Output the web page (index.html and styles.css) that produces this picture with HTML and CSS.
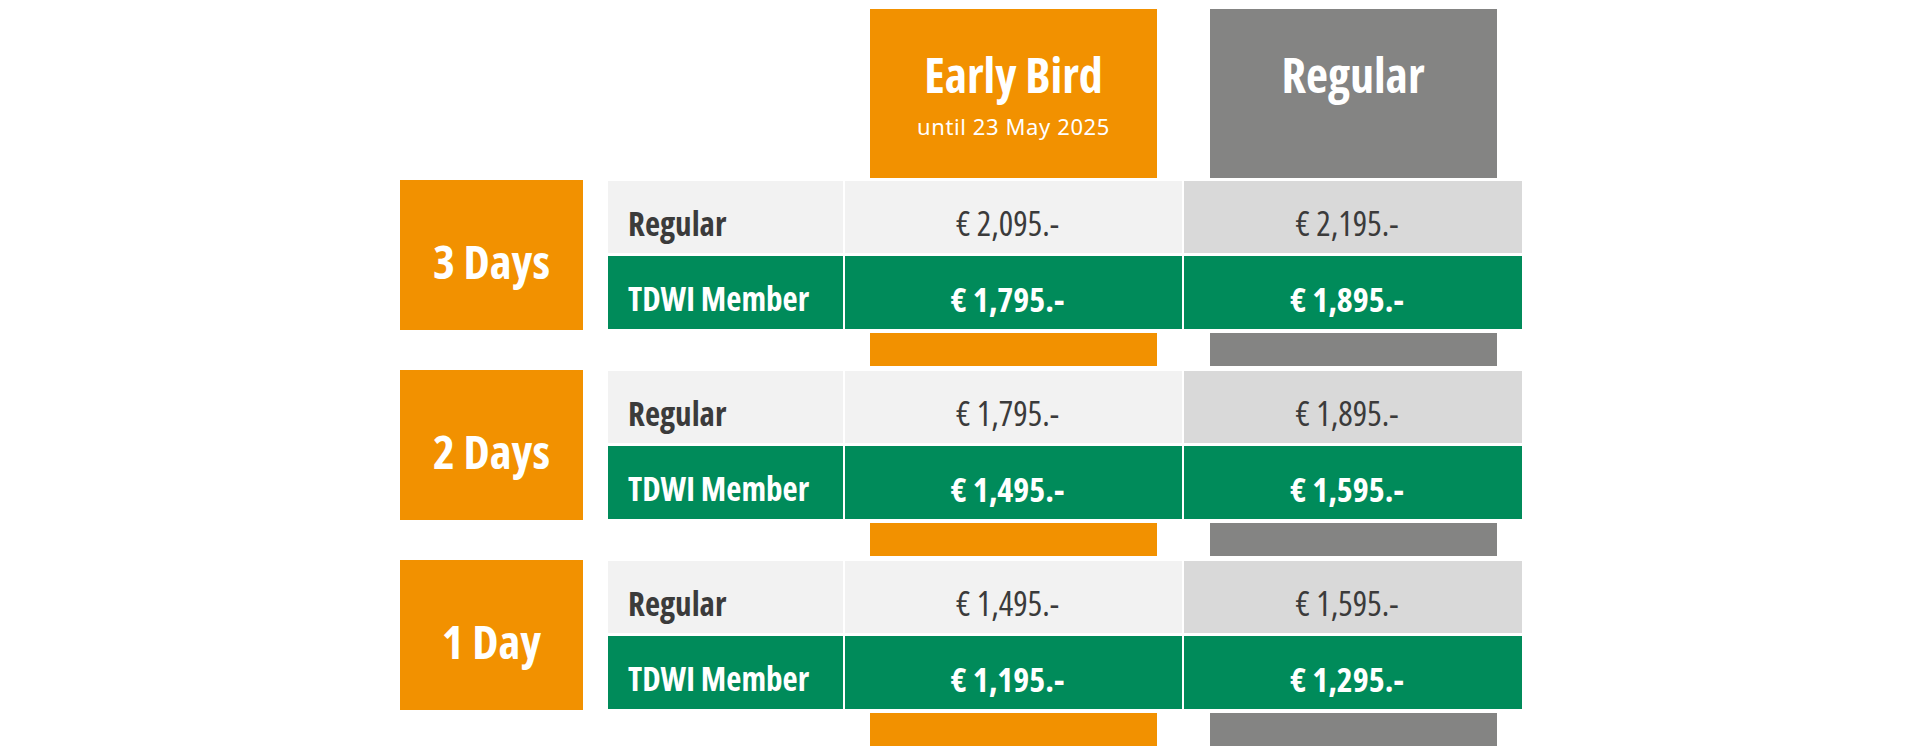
FILE: index.html
```html
<!DOCTYPE html>
<html lang="en">
<head>
<meta charset="utf-8">
<title>Pricing</title>
<link rel="stylesheet" href="styles.css">
</head>
<body>
<div class="page">
  <div class="cols head">
    <div class="col"><div class="hbox orange"><div class="htitle">Early Bird</div><div class="hsub">until 23 May 2025</div></div></div>
    <div class="col"><div class="hbox gray"><div class="htitle">Regular</div></div></div>
  </div>

  <div class="section">
    <div class="group">
      <div class="day">3 Days</div>
      <div class="table">
        <div class="cell label light">Regular</div>
        <div class="cell price light">€ 2,095.-</div>
        <div class="cell price mid">€ 2,195.-</div>
        <div class="cell label green">TDWI Member</div>
        <div class="cell price green">€ 1,795.-</div>
        <div class="cell price green">€ 1,895.-</div>
      </div>
    </div>
    <div class="cols spacer">
      <div class="col"><div class="bar orange"></div></div>
      <div class="col"><div class="bar gray"></div></div>
    </div>
  </div>

  <div class="section">
    <div class="group">
      <div class="day">2 Days</div>
      <div class="table">
        <div class="cell label light">Regular</div>
        <div class="cell price light">€ 1,795.-</div>
        <div class="cell price mid">€ 1,895.-</div>
        <div class="cell label green">TDWI Member</div>
        <div class="cell price green">€ 1,495.-</div>
        <div class="cell price green">€ 1,595.-</div>
      </div>
    </div>
    <div class="cols spacer">
      <div class="col"><div class="bar orange"></div></div>
      <div class="col"><div class="bar gray"></div></div>
    </div>
  </div>

  <div class="section">
    <div class="group">
      <div class="day">1 Day</div>
      <div class="table">
        <div class="cell label light">Regular</div>
        <div class="cell price light">€ 1,495.-</div>
        <div class="cell price mid">€ 1,595.-</div>
        <div class="cell label green">TDWI Member</div>
        <div class="cell price green">€ 1,195.-</div>
        <div class="cell price green">€ 1,295.-</div>
      </div>
    </div>
    <div class="cols spacer">
      <div class="col"><div class="bar orange"></div></div>
      <div class="col"><div class="bar gray"></div></div>
    </div>
  </div>
</div>
</body>
</html>
```
FILE: styles.css
```css
html, body {
  margin: 0;
  padding: 0;
  background: #ffffff;
}
body {
  font-family: "Open Sans", "Noto Sans", sans-serif;
  font-stretch: 75%;
  color: #3b3b3b;
}
.page {
  width: 1122px;
  margin: 0 auto;
  padding: 9px 0 0 2px;
  display: flex;
  flex-direction: column;
}
.cols {
  display: flex;
  gap: 2px;
  padding-left: 445px;
}
.col {
  display: flex;
  justify-content: center;
}
.col:first-child { width: 337px; }
.col:last-child { width: 338px; }

.orange { background: #f29100; }
.gray { background: #848483; }
.light { background: #f2f2f2; }
.mid { background: #d9d9d9; }
.green { background: #008b5a; color: #ffffff; }

.head { margin-bottom: 2px; }
.hbox {
  width: 287px;
  height: 169px;
  box-sizing: border-box;
  padding-top: 38px;
  display: flex;
  flex-direction: column;
  align-items: center;
  color: #ffffff;
}
.htitle {
  font-size: 48px;
  font-weight: 700;
  line-height: 56px;
}
.hsub {
  font-family: "Noto Sans", sans-serif;
  font-stretch: 100%;
  font-size: 22px;
  letter-spacing: 0.6px;
  line-height: 28px;
  margin-top: 9px;
}

.section {
  display: flex;
  flex-direction: column;
  gap: 3px;
  margin-bottom: 4px;
}
.group {
  display: flex;
  height: 150px;
}
.day {
  width: 183px;
  height: 150px;
  margin-right: 25px;
  background: #f29100;
  color: #ffffff;
  font-size: 47px;
  font-weight: 700;
  display: flex;
  align-items: center;
  justify-content: center;
  box-sizing: border-box;
  padding-top: 12px;
}
.table {
  display: grid;
  grid-template-columns: 235px 337px 338px;
  grid-template-rows: 72px 73px;
  column-gap: 2px;
  row-gap: 3px;
  margin-top: 1px;
}
.cell {
  display: flex;
  align-items: center;
  box-sizing: border-box;
  padding-top: 12px;
  white-space: nowrap;
}
.label {
  font-size: 33px;
  font-weight: 700;
  padding-left: 20px;
}
.price {
  justify-content: center;
  font-size: 34px;
  font-weight: 400;
  padding-right: 12px;
}
.price.green { font-weight: 700; }

.spacer .bar {
  width: 287px;
  height: 33px;
}
```
